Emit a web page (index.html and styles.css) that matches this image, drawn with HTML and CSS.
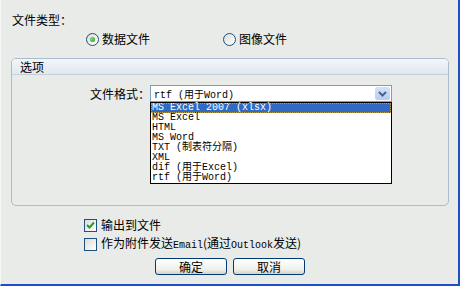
FILE: index.html
```html
<!DOCTYPE html>
<html lang="zh-CN">
<head>
    <meta charset="UTF-8">
    <title>导出</title>
    <link rel="stylesheet" href="styles.css">
</head>
<body>
    <div class="window">
        <!-- file type -->
        <div class="type-label">文件类型：</div>
        <div class="radio-row">
            <label class="radio-item">
                <span class="radio checked"></span>
                <span>数据文件</span>
            </label>
            <label class="radio-item">
                <span class="radio"></span>
                <span>图像文件</span>
            </label>
        </div>

        <!-- options group -->
        <div class="group">
            <div class="group-head">选项</div>
            <div class="group-body">
                <div class="format-row">
                    <span class="format-label">文件格式：</span>
                    <div class="select">
                        <span class="select-value">rtf (用于Word)</span>
                        <span class="select-btn">
                            <svg width="9" height="6" viewBox="0 0 9 6"><path d="M1 1 L4.5 4.5 L8 1" fill="none" stroke="#4d6185" stroke-width="2"/></svg>
                        </span>
                        <ul class="select-list">
                            <li class="active">MS Excel 2007 (xlsx)</li>
                            <li>MS Excel</li>
                            <li>HTML</li>
                            <li>MS Word</li>
                            <li>TXT (制表符分隔)</li>
                            <li>XML</li>
                            <li>dif (用于Excel)</li>
                            <li>rtf (用于Word)</li>
                        </ul>
                    </div>
                </div>
            </div>
        </div>

        <!-- output options -->
        <label class="check-row">
            <span class="checkbox checked">
                <svg width="9" height="8" viewBox="0 0 9 8"><path d="M1 4 L3.5 6.5 L8 1.5" fill="none" stroke="#21a121" stroke-width="2"/></svg>
            </span>
            <span>输出到文件</span>
        </label>
        <label class="check-row second">
            <span class="checkbox"></span>
            <span>作为附件发送<span class="mono">Email</span>(通过<span class="mono">Outlook</span>发送)</span>
        </label>

        <div class="buttons">
            <button class="btn">确定</button>
            <button class="btn">取消</button>
        </div>
    </div>
</body>
</html>
```

FILE: styles.css
```css
/* General Styles */
body {
    margin: 0;
    padding: 0;
    font-family: "Noto Sans CJK SC", "Liberation Sans", sans-serif;
    font-size: 12px;
    color: #000;
}

.window {
    width: 460px;
    height: 286px;
    box-sizing: border-box;
    background-color: #e8ebe8;
    border-left: 1px solid #f6f8f6;
    border-right: 2px solid #1f4fc6;
    border-bottom: 2px solid #1f4fc6;
    display: flex;
    flex-direction: column;
}

.type-label {
    margin: 12px 0 0 11px;
    height: 16px;
    line-height: 16px;
}

.radio-row {
    display: flex;
    margin-top: 4px;
    height: 14px;
}

.radio-item {
    display: flex;
    align-items: center;
    gap: 3px;
    line-height: 14px;
}

.radio-item:first-child {
    margin-left: 85px;
}

.radio-item:last-child {
    margin-left: 73px;
}

.radio {
    width: 11px;
    height: 11px;
    border: 1px solid #1c5180;
    border-radius: 50%;
    background: linear-gradient(135deg, #dcdcd6, #ffffff);
    display: flex;
    align-items: center;
    justify-content: center;
}

.radio.checked::after {
    content: "";
    width: 5px;
    height: 5px;
    border-radius: 50%;
    background: radial-gradient(circle at 40% 40%, #7be07b, #219321);
}

/* Group box */
.group {
    margin: 12px 0 0 10px;
    width: 438px;
    height: 148px;
    box-sizing: border-box;
    border: 1px solid #a9bdcf;
    border-radius: 5px;
}

.group-head {
    height: 15px;
    line-height: 15px;
    padding-left: 8px;
    background: linear-gradient(#f2f6fa, #dfe8f1);
    border-bottom: 1px solid #c3d1de;
    border-radius: 4px 4px 0 0;
}

.group-body {
    padding-top: 10px;
}

.format-row {
    display: flex;
    align-items: center;
}

.format-label {
    width: 138px;
    text-align: right;
}

.select {
    position: relative;
    width: 242px;
    height: 17px;
    box-sizing: border-box;
    border: 1px solid #7f9db9;
    background: #fff;
    display: flex;
    align-items: center;
    justify-content: space-between;
}

.select-value,
.select-list,
.mono {
    font-family: "Liberation Mono", "Noto Sans CJK SC", monospace;
    font-size: 10px;
}

.select-value {
    padding-left: 3px;
}

.select-btn {
    width: 15px;
    height: 13px;
    margin-right: 1px;
    border-radius: 2px;
    background: linear-gradient(#d3e1fc, #b7ccf6);
    display: flex;
    align-items: center;
    justify-content: center;
}

.select-list {
    position: absolute;
    top: 16px;
    left: -1px;
    width: 242px;
    box-sizing: border-box;
    margin: 0;
    padding: 0;
    list-style: none;
    background: #fff;
    border: 1px solid #000;
}

.select-list li {
    height: 10px;
    line-height: 10px;
    padding-left: 1px;
    white-space: nowrap;
}

.select-list li.active {
    background-color: #316ac5;
    color: #fff;
    outline: 1px dotted #b99a4a;
    outline-offset: -1px;
}

/* Checkboxes */
.check-row {
    display: flex;
    align-items: center;
    gap: 4px;
    margin: 12px 0 0 83px;
    height: 14px;
    line-height: 14px;
}

.check-row.second {
    margin-top: 5px;
}

.checkbox {
    width: 11px;
    height: 11px;
    border: 1px solid #1c5180;
    background: linear-gradient(135deg, #dcdcd6, #ffffff);
    display: flex;
    align-items: center;
    justify-content: center;
}

.buttons {
    display: flex;
    gap: 6px;
    margin: 7px 0 0 154px;
}

.btn {
    width: 72px;
    height: 17px;
    padding: 0;
    font-family: "Noto Sans CJK SC", sans-serif;
    font-size: 12px;
    line-height: 15px;
    color: #000;
    border: 1px solid #003c74;
    border-radius: 3px;
    background: linear-gradient(#ffffff, #f0f0ea 70%, #d6d0c5);
    cursor: pointer;
}
```
